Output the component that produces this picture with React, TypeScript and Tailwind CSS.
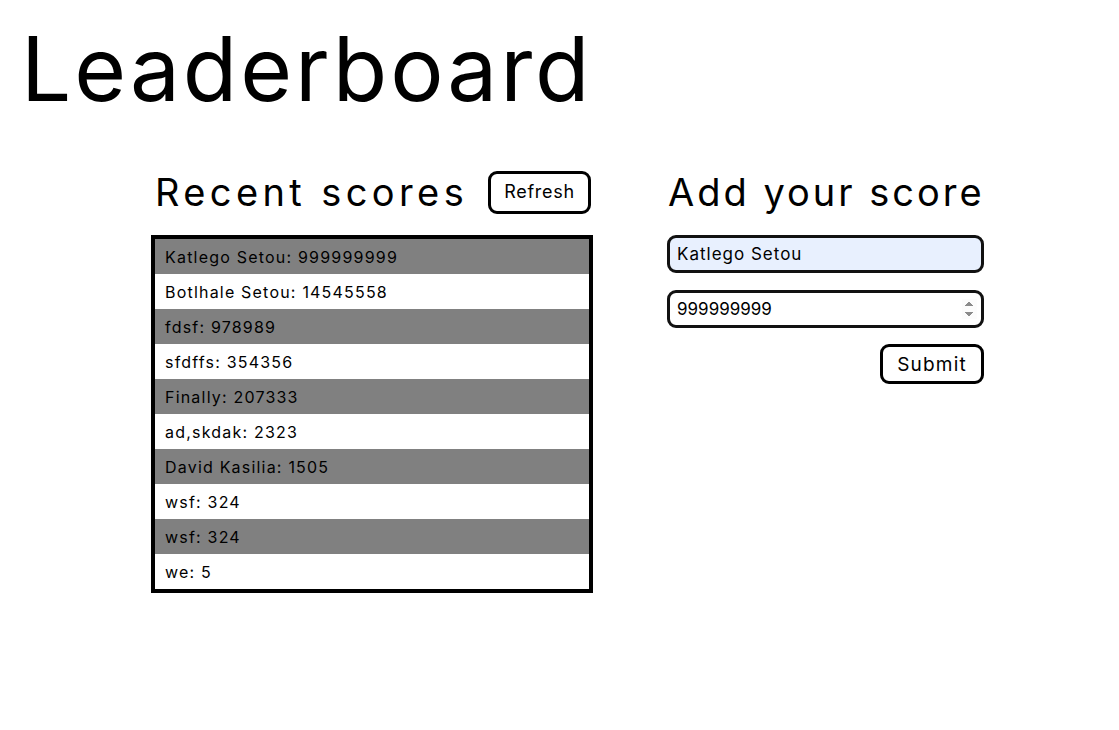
const scores = [
  { name: 'Katlego Setou', score: 999999999 },
  { name: 'Botlhale Setou', score: 14545558 },
  { name: 'fdsf', score: 978989 },
  { name: 'sfdffs', score: 354356 },
  { name: 'Finally', score: 207333 },
  { name: 'ad,skdak', score: 2323 },
  { name: 'David Kasilia', score: 1505 },
  { name: 'wsf', score: 324 },
  { name: 'wsf', score: 324 },
  { name: 'we', score: 5 },
];

export default function App() {
  return (
    <div className="min-h-[730px] bg-white text-black font-['Inter',sans-serif]">
      <h1 className="pl-[21px] pt-[14px] text-[89px] leading-[110px] font-normal tracking-[2.9px]">
        Leaderboard
      </h1>

      <div className="flex items-start gap-[74px] pl-[151px] pt-[46px]">
        <section className="w-[442px]">
          <div className="flex items-center justify-between pl-[4px] pr-[2px]">
            <h2 className="whitespace-nowrap text-[38px] leading-[44px] font-normal tracking-[4.4px]">Recent scores</h2>
            <button className="h-[43px] w-[103px] rounded-[9px] border-[3px] border-black bg-white text-[18px] leading-none tracking-[0.7px]">
              Refresh
            </button>
          </div>
          <ul className="mt-[21px] border-[4px] border-black">
            {scores.map((s, i) => (
              <li
                key={i}
                className={`h-[35px] pl-[10px] flex items-center text-[16px] tracking-[1.2px] ${i % 2 === 0 ? 'bg-[#808080]' : 'bg-white'}`}
              >
                {s.name}: {s.score}
              </li>
            ))}
          </ul>
        </section>

        <section className="w-[317px]">
          <h2 className="whitespace-nowrap pl-[1px] text-[38px] leading-[44px] font-normal tracking-[3px]">Add your score</h2>
          <form className="mt-[21px] flex flex-col" onSubmit={(e) => e.preventDefault()}>
            <input
              type="text"
              defaultValue="Katlego Setou"
              className="h-[38px] rounded-[9px] border-[3px] border-[#111] bg-[#e8f0fe] px-[7px] text-[17px] tracking-[1px] outline-none"
            />
            <input
              type="number"
              autoFocus
              defaultValue={999999999}
              className="mt-[17px] h-[38px] rounded-[9px] border-[3px] border-[#111] bg-white pl-[7px] pr-[4px] text-[17px] outline-none"
            />
            <button
              type="submit"
              className="mt-[16px] self-end h-[40px] w-[104px] rounded-[9px] border-[3px] border-black bg-white text-[19px] leading-none tracking-[1.2px]"
            >
              Submit
            </button>
          </form>
        </section>
      </div>
    </div>
  );
}
